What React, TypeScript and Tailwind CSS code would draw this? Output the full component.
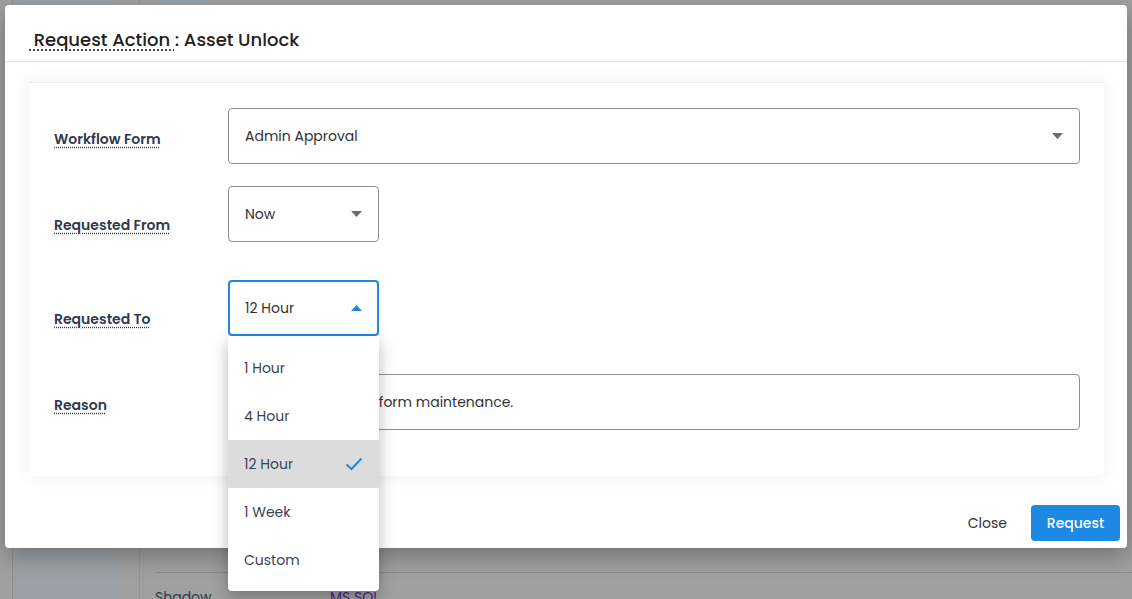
import React from "react";

const font = { fontFamily: "Poppins, Inter, 'Noto Sans', sans-serif" };

function Caret({ up = false, color = "#6b6b6b" }: { up?: boolean; color?: string }) {
  return (
    <svg width="11" height="6" viewBox="0 0 11 6" className="shrink-0">
      {up ? <path d="M0 6 L5.5 0 L11 6 Z" fill={color} /> : <path d="M0 0 L5.5 6 L11 0 Z" fill={color} />}
    </svg>
  );
}

function Label({ children, pt }: { children: React.ReactNode; pt: string }) {
  return (
    <div className={`w-[174px] shrink-0 ${pt}`}>
      <span className="text-[14px] font-semibold leading-5 text-[#2f3a4d] underline decoration-dotted decoration-[#2f3a4d] underline-offset-[3px]">
        {children}
      </span>
    </div>
  );
}

export default function App() {
  const items = ["1 Hour", "4 Hour", "12 Hour", "1 Week", "Custom"];
  return (
    <div className="relative w-[1132px] h-[599px] overflow-hidden bg-[#a0a0a0]" style={font}>
      {/* background page (dimmed) */}
      <div className="flex h-full">
        <div className="w-[12px]" />
        <div className="w-[103px] h-full bg-[#9ba1a6] border-l border-[#8f8f8f]" />
        <div className="w-[24px]" />
        <div className="w-px h-full bg-[#939393]" />
        <div className="flex-1 pl-[15px] flex flex-col">
          <div className="h-[4px] flex">
            <div className="ml-[5px] w-[50px] h-[4px] rounded-b bg-[#98a2ad]" />
          </div>
          <div className="mt-auto h-[43px] flex items-start text-[13px] text-[#333] pt-[5px]">
            <span className="w-[28px] border-b border-dotted border-[#333]" />
            <span className="ml-[465px] w-[32px] border-b border-dotted border-[#333]" />
            <span className="ml-[275px] w-[63px] border-b border-dotted border-[#333]" />
          </div>
          <div className="border-t border-[#8c8c8c] h-[27px] flex items-end text-[14px] leading-5">
            <span className="w-[175px] text-[#2f3a4d] -mb-[8px]">Shadow</span>
            <span className="text-[#4b1c8c] -mb-[8px]">MS SQL</span>
          </div>
        </div>
      </div>

      {/* modal */}
      <div className="absolute left-[5px] top-[5px] w-[1122px] h-[543px] bg-white rounded-[4px] shadow-[0_8px_24px_rgba(0,0,0,0.3)] flex flex-col">
        <div className="h-[57px] border-b border-[#e3e3e3] flex items-center pl-[24px] pt-[12px]">
          <h2 className="text-[18px] font-medium text-[#222]">
            <span className="underline decoration-dotted decoration-[#333] underline-offset-[4px]">&nbsp;Request Action </span>
            <span>: Asset Unlock</span>
          </h2>
        </div>
        <div className="px-[24px] pt-[20px] pr-[23px]">
          <div className="border-t border-[#ebebeb] rounded-b-[6px] bg-white shadow-[0_0_18px_rgba(0,0,0,0.07)] pl-[25px] pr-[24px] pt-[25px] pb-[46px] flex flex-col">
            <div className="flex">
              <Label pt="pt-[19px]">Workflow Form</Label>
              <div className="flex-1 h-[56px] border border-[#8f8f8f] rounded-[4px] flex items-center justify-between pl-[16px] pr-[16px]">
                <span className="text-[14px] text-[#333] pt-[1px]">Admin Approval</span>
                <Caret />
              </div>
            </div>
            <div className="flex mt-[22px]">
              <Label pt="pt-[27px]">Requested From</Label>
              <div className="w-[151px] h-[56px] border border-[#8f8f8f] rounded-[4px] flex items-center justify-between pl-[16px] pr-[16px]">
                <span className="text-[14px] text-[#333] pt-[1px]">Now</span>
                <Caret />
              </div>
            </div>
            <div className="flex mt-[38px]">
              <Label pt="pt-[27px]">Requested To</Label>
              <div className="relative w-[151px] h-[56px] border-2 border-[#1e88e5] rounded-[4px] flex items-center justify-between pl-[15px] pr-[15px]">
                <span className="text-[14px] text-[#333] pt-[1px]">12 Hour</span>
                <Caret up color="#1e88e5" />
                <div className="absolute left-[-2px] top-[54px] w-[151px] z-10 bg-white rounded-b-[4px] shadow-[0_6px_16px_rgba(0,0,0,0.28)] pt-[8px] pb-[7px] flex flex-col">
                  {items.map((it) => (
                    <div
                      key={it}
                      className={`h-[48px] flex items-center justify-between pl-[16px] pr-[16px] text-[14px] text-[#3a4254] ${
                        it === "12 Hour" ? "bg-[#dcdcdc]" : ""
                      }`}
                    >
                      <span>{it}</span>
                      {it === "12 Hour" && (
                        <svg width="18" height="14" viewBox="0 0 18 14">
                          <path d="M1.5 7.5 L6.5 12 L16.5 1.5" fill="none" stroke="#1e88e5" strokeWidth="2" />
                        </svg>
                      )}
                    </div>
                  ))}
                </div>
              </div>
            </div>
            <div className="flex mt-[38px]">
              <Label pt="pt-[19px]">Reason</Label>
              <div className="flex-1 h-[56px] border border-[#8f8f8f] rounded-[4px] flex items-center pl-[16px]">
                <span className="text-[14px] text-[#333] pt-[1px]">Re-schedule to perform maintenance.</span>
              </div>
            </div>
          </div>
        </div>
        <div className="mt-auto h-[59px] flex items-start justify-end pr-[7px] pt-[16px]">
          <button className="h-[36px] px-[15px] text-[14px] text-[#333] mr-[9px]">Close</button>
          <button className="h-[36px] w-[89px] rounded-[4px] bg-[#1e88e5] text-white text-[14px] font-medium">Request</button>
        </div>
      </div>
    </div>
  );
}
